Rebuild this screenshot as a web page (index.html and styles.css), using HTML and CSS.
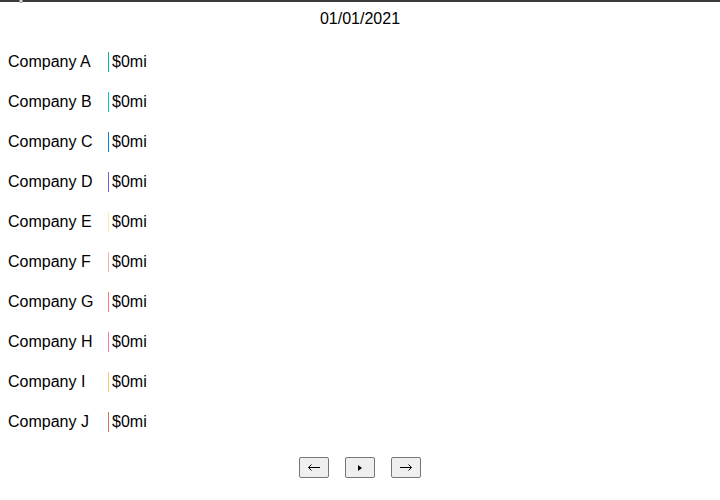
FILE: index.html
```html
<!DOCTYPE html>
<html>
<head>
<meta charset="utf-8">
<link rel="stylesheet" href="styles.css">
</head>
<body>
<div class="topline"><span class="knob"></span></div>
<div class="page">
  <div class="date">01/01/2021</div>
  <div class="rows">
    <div class="row"><span class="label">Company A</span><span class="bar c-a"></span><span class="val">$0mi</span></div>
    <div class="row"><span class="label">Company B</span><span class="bar c-b"></span><span class="val">$0mi</span></div>
    <div class="row"><span class="label">Company C</span><span class="bar c-c"></span><span class="val">$0mi</span></div>
    <div class="row"><span class="label">Company D</span><span class="bar c-d"></span><span class="val">$0mi</span></div>
    <div class="row"><span class="label">Company E</span><span class="bar c-e"></span><span class="val">$0mi</span></div>
    <div class="row"><span class="label">Company F</span><span class="bar c-f"></span><span class="val">$0mi</span></div>
    <div class="row"><span class="label">Company G</span><span class="bar c-g"></span><span class="val">$0mi</span></div>
    <div class="row"><span class="label">Company H</span><span class="bar c-h"></span><span class="val">$0mi</span></div>
    <div class="row"><span class="label">Company I</span><span class="bar c-i"></span><span class="val">$0mi</span></div>
    <div class="row"><span class="label">Company J</span><span class="bar c-j"></span><span class="val">$0mi</span></div>
  </div>
  <div class="controls">
    <button class="btn" aria-label="previous"><svg width="12" height="7" viewBox="0 0 12 7"><path d="M0.5 3.5H12M3.5 0.5L0.5 3.5L3.5 6.5" fill="none" stroke="#000" stroke-width="1"/></svg></button>
    <button class="btn" aria-label="play"><span class="tri"></span></button>
    <button class="btn" aria-label="next"><svg width="12" height="7" viewBox="0 0 12 7"><path d="M0 3.5H11.5M8.5 0.5L11.5 3.5L8.5 6.5" fill="none" stroke="#000" stroke-width="1"/></svg></button>
  </div>
</div>
</body>
</html>
```
FILE: styles.css
```css
html, body {
  margin: 0;
  padding: 0;
  background: #fff;
  font-family: "Liberation Sans", Arial, sans-serif;
  color: #000;
}
.topline {
  height: 2px;
  background: #3a3a3a;
  position: relative;
}
.knob {
  position: absolute;
  left: 19px;
  top: -1px;
  width: 4px;
  height: 4px;
  border-radius: 50%;
  background: #fff;
  border: 1px solid #888;
  box-sizing: border-box;
}
.page {
  padding: 0 8px;
}
.date {
  text-align: center;
  font-size: 16px;
  line-height: 18px;
  padding-top: 8px;
}
.rows {
  display: flex;
  flex-direction: column;
  gap: 20px;
  margin-top: 24px;
}
.row {
  display: flex;
  align-items: center;
  height: 20px;
  font-size: 16px;
}
.label {
  width: 100px;
}
.bar {
  width: 1px;
  height: 20px;
  margin-right: 3px;
}
.c-a { background: #00b894; }
.c-b { background: #00cec9; }
.c-c { background: #0984e3; }
.c-d { background: #6c5ce7; }
.c-e { background: #ffeaa7; }
.c-f { background: #fab1a0; }
.c-g { background: #ff7675; }
.c-h { background: #fd79a8; }
.c-i { background: #fdcb6e; }
.c-j { background: #e17055; }
.controls {
  display: flex;
  justify-content: center;
  gap: 16px;
  margin-top: 25px;
}
.btn {
  width: 30px;
  height: 21px;
  padding: 0;
  background: #efefef;
  border: 1px solid #767676;
  border-radius: 2px;
  display: flex;
  align-items: center;
  justify-content: center;
}
.tri {
  width: 0;
  height: 0;
  border-left: 4px solid #000;
  border-top: 3px solid transparent;
  border-bottom: 3px solid transparent;
}
```
